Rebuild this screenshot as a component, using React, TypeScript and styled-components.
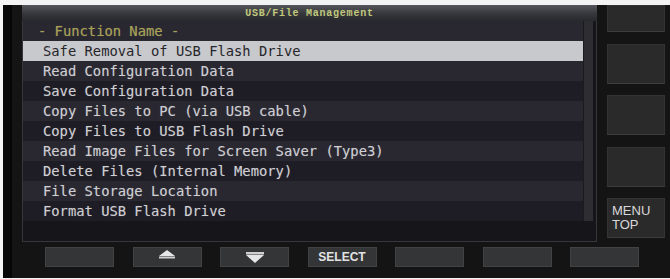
import React from "react";
import styled, { createGlobalStyle } from "styled-components";

const Global = createGlobalStyle`
  html, body { margin: 0; padding: 0; background: #f3f3f3; }
  body { width: 670px; height: 279px; overflow: hidden; }
`;

const Device = styled.div`
  margin: 5px 0 0 3px;
  width: 667px;
  height: 273px;
  background: linear-gradient(to right, #060606 0, #060606 9px, #141415 9px);
  display: flex;
  flex-direction: column;
  overflow: hidden;
`;

const TopArea = styled.div`
  display: flex;
  padding-left: 19px;
  height: 237px;
`;

const Panel = styled.section`
  width: 575px;
  display: flex;
  flex-direction: column;
`;

const TitleBar = styled.div`
  height: 16px;
  background: linear-gradient(#55565b, #36373c 55%, #28292d);
  display: flex;
  align-items: center;
  justify-content: center;
  font-family: "Liberation Mono", monospace;
  font-size: 10px;
  font-weight: bold;
  letter-spacing: 0.75px;
  color: #c2c97c;
`;

const Body = styled.div`
  flex: 1;
  box-sizing: border-box;
  border: 1px solid #37373b;
  border-top: none;
  background: #161519;
`;

const ListArea = styled.div`
  display: flex;
`;

const List = styled.div`
  width: 560px;
  display: flex;
  flex-direction: column;
`;

const ScrollTrack = styled.div`
  width: 10px;
  background: #2e2e32;
  border-left: 1px solid #1b1b1e;
  box-sizing: border-box;
`;

type Tone = "light" | "dark" | "selected" | "header";

const Row = styled.div<{ $tone: Tone }>`
  height: 20px;
  line-height: 20px;
  box-sizing: border-box;
  padding-left: ${(p) => (p.$tone === "header" ? 15 : 20)}px;
  font-family: "DejaVu Sans Mono", monospace;
  font-size: 13.8px;
  white-space: pre;
  background: ${(p) =>
    p.$tone === "selected"
      ? "#c8c9cd"
      : p.$tone === "dark"
      ? "#1e1d25"
      : "#292831"};
  color: ${(p) =>
    p.$tone === "selected"
      ? "#26262a"
      : p.$tone === "header"
      ? "#aba24f"
      : "#cfcfd3"};
  text-shadow: ${(p) =>
    p.$tone === "selected" ? "none" : "0 0 1px rgba(255,255,255,0.25)"};
`;

const SideKeys = styled.div`
  margin-left: 10px;
  width: 58px;
  display: flex;
  flex-direction: column;
  gap: 11.5px;
`;

const SideKey = styled.div<{ $short?: boolean }>`
  height: ${(p) => (p.$short ? 27 : 40)}px;
  box-sizing: border-box;
  background: #2a2a2b;
  border: 1px solid #333334;
  border-bottom-color: #3d3d3e;
  display: flex;
  flex-direction: column;
  justify-content: center;
  padding-left: 4px;
  font-family: "Liberation Sans", Arial, sans-serif;
  font-size: 13px;
  line-height: 14px;
  color: #d8d8da;
`;

const BottomKeys = styled.div`
  display: flex;
  gap: 18.5px;
  margin-top: 5px;
  padding-left: 42px;
`;

const BottomKey = styled.div`
  width: 69px;
  height: 20px;
  box-sizing: border-box;
  background: #343537;
  border: 1px solid #414244;
  display: flex;
  align-items: center;
  justify-content: center;
  font-family: "Liberation Sans", Arial, sans-serif;
  font-weight: bold;
  font-size: 12px;
  color: #e2e2e4;
`;

const UpArrow = () => (
  <svg width="18" height="9" viewBox="0 0 18 9" style={{ marginBottom: 5 }}>
    <polygon points="9,0 17,6 1,6" fill="#e6e6e8" />
    <rect x="1" y="6.5" width="16" height="2" fill="#cfcfd2" />
  </svg>
);

const DownArrow = () => (
  <svg width="20" height="11" viewBox="0 0 20 11">
    <rect x="1" y="0" width="18" height="2.5" fill="#cfcfd2" />
    <polygon points="1,3 19,3 10,11" fill="#e6e6e8" />
  </svg>
);

const items = [
  "Safe Removal of USB Flash Drive",
  "Read Configuration Data",
  "Save Configuration Data",
  "Copy Files to PC (via USB cable)",
  "Copy Files to USB Flash Drive",
  "Read Image Files for Screen Saver (Type3)",
  "Delete Files (Internal Memory)",
  "File Storage Location",
  "Format USB Flash Drive",
];

export default function App() {
  return (
    <>
      <Global />
      <Device>
        <TopArea>
          <Panel>
            <TitleBar>USB/File Management</TitleBar>
            <Body>
              <ListArea>
                <List>
                  <Row $tone="header">- Function Name -</Row>
                  {items.map((t, i) => (
                    <Row
                      key={t}
                      $tone={i === 0 ? "selected" : i % 2 === 1 ? "light" : "dark"}
                    >
                      {t}
                    </Row>
                  ))}
                </List>
                <ScrollTrack />
              </ListArea>
            </Body>
          </Panel>
          <SideKeys>
            <SideKey $short />
            <SideKey />
            <SideKey />
            <SideKey />
            <SideKey>
              <span>MENU</span>
              <span>TOP</span>
            </SideKey>
          </SideKeys>
        </TopArea>
        <BottomKeys>
          <BottomKey />
          <BottomKey>
            <UpArrow />
          </BottomKey>
          <BottomKey>
            <DownArrow />
          </BottomKey>
          <BottomKey>SELECT</BottomKey>
          <BottomKey />
          <BottomKey />
          <BottomKey />
        </BottomKeys>
      </Device>
    </>
  );
}
